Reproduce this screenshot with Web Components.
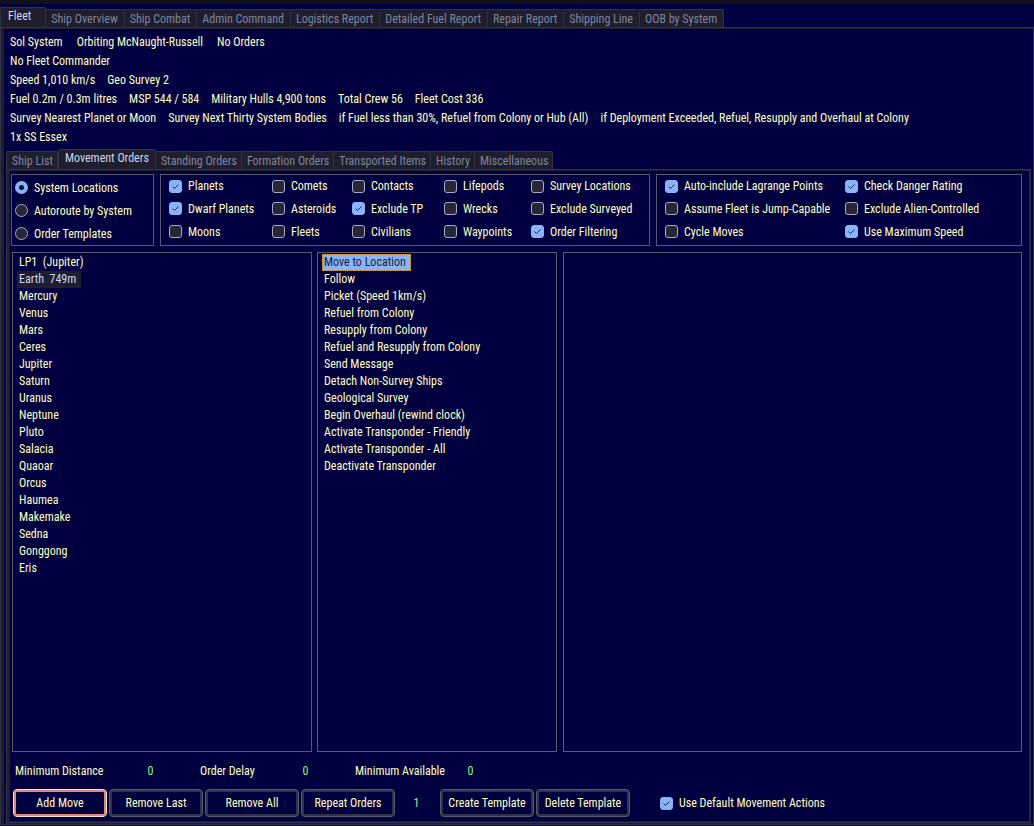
<!DOCTYPE html>
<html lang="en">
<head>
<meta charset="utf-8">
<title>Fleet Orders</title>
<style>
  html, body { margin: 0; background: #000040; }
  body {
    color: #ffffc0;
    font: 12px/16px "Roboto Condensed", Roboto, sans-serif;
    --navy: #000040;
    --panel: #1e1e2e;
    --edge: #313244;
    --line: #585b70;
    --blue: #89b4fa;
    --muted: #7f849c;
    --green: #80ff80;
  }
</style>
</head>
<body>
<fleet-window></fleet-window>

<template id="t-window">
  <style>
    :host { display: flex; flex-direction: column; min-height: 100vh; box-sizing: border-box; border-top: 4px solid #11111b; padding: 4px 0 1px; }
    .outer { flex: 1; }
    .info { display: flex; flex-direction: column; padding: 5px 6px 0; }
    .row { display: flex; gap: 12px; height: 19px; line-height: 19px; white-space: nowrap; }
    .row.wide { gap: 14px; }
    .inner { flex: 1; padding: 3px 2px 0 2px; }
    .body { display: flex; flex-direction: column; flex: 1; padding: 4px 7px 4px 1px; }
    .groups { display: flex; gap: 6px; }
    .lists { display: flex; gap: 6px; flex: 1; padding: 6px 0 0 1px; }
    .values { display: flex; gap: 30px; height: 37px; align-items: center; padding-left: 4px; }
    .actions { display: flex; align-items: center; gap: 2px; padding-left: 2px; height: 28px; }
    field-group.filters { flex: 0 1 490px; }
    field-group.modes { flex: 0 0 143px; }
    field-group.options { flex: 1; }
    .grid { display: grid; grid-template-rows: 22px 23px 23px; }
    .filters .grid { grid-template-columns: 103px 80px 92px 87px auto; }
    .options .grid { grid-template-columns: 180px auto; }
    order-list.locations { flex: 0 1 300px; margin-right: -1px; }
    order-list.orders { flex: 0 1 240px; }
    order-list.queue { flex: 1; }
    .distance { --label: 116px; }
    .delay { --label: 86px; }
    .available { --label: 96px; }
    .repeat { margin-right: 2px; }
    order-check.defaults { margin-left: 28px; }
  </style>
  <tab-panel class="outer" label="Fleet views" selected="0"
    tabs="Fleet|Ship Overview|Ship Combat|Admin Command|Logistics Report|Detailed Fuel Report|Repair Report|Shipping Line|OOB by System">
    <div class="info">
      <div class="row wide"><span>Sol System</span><span>Orbiting McNaught-Russell</span><span>No Orders</span></div>
      <div class="row"><span>No Fleet Commander</span></div>
      <div class="row"><span>Speed 1,010 km/s</span><span>Geo Survey 2</span></div>
      <div class="row"><span>Fuel 0.2m / 0.3m litres</span><span>MSP 544 / 584</span><span>Military Hulls 4,900 tons</span><span>Total Crew 56</span><span>Fleet Cost 336</span></div>
      <div class="row"><span>Survey Nearest Planet or Moon</span><span>Survey Next Thirty System Bodies</span><span>if Fuel less than 30%, Refuel from Colony or Hub (All)</span><span>if Deployment Exceeded, Refuel, Resupply and Overhaul at Colony</span></div>
      <div class="row"><span>1x SS Essex</span></div>
    </div>
    <tab-panel class="inner" label="Fleet details" selected="1"
      tabs="Ship List|Movement Orders|Standing Orders|Formation Orders|Transported Items|History|Miscellaneous">
      <div class="body">
        <div class="groups">
          <field-group class="modes"><mode-picker></mode-picker></field-group>
          <field-group class="filters"><div class="grid">
            <order-check checked>Planets</order-check><order-check>Comets</order-check><order-check>Contacts</order-check><order-check>Lifepods</order-check><order-check>Survey Locations</order-check>
            <order-check checked>Dwarf Planets</order-check><order-check>Asteroids</order-check><order-check checked>Exclude TP</order-check><order-check>Wrecks</order-check><order-check>Exclude Surveyed</order-check>
            <order-check>Moons</order-check><order-check>Fleets</order-check><order-check>Civilians</order-check><order-check>Waypoints</order-check><order-check checked>Order Filtering</order-check>
          </div></field-group>
          <field-group class="options"><div class="grid">
            <order-check checked>Auto-include Lagrange Points</order-check><order-check checked>Check Danger Rating</order-check>
            <order-check>Assume Fleet is Jump-Capable</order-check><order-check>Exclude Alien-Controlled</order-check>
            <order-check>Cycle Moves</order-check><order-check checked>Use Maximum Speed</order-check>
          </div></field-group>
        </div>
        <div class="lists">
          <order-list class="locations" label="System locations" selected="1"
            items="LP1  (Jupiter)|Earth  749m|Mercury|Venus|Mars|Ceres|Jupiter|Saturn|Uranus|Neptune|Pluto|Salacia|Quaoar|Orcus|Haumea|Makemake|Sedna|Gonggong|Eris"></order-list>
          <order-list class="orders" label="Available orders" selected="0" active
            items="Move to Location|Follow|Picket (Speed 1km/s)|Refuel from Colony|Resupply from Colony|Refuel and Resupply from Colony|Send Message|Detach Non-Survey Ships|Geological Survey|Begin Overhaul (rewind clock)|Activate Transponder - Friendly|Activate Transponder - All|Deactivate Transponder"></order-list>
          <order-list class="queue" label="Assigned orders" items=""></order-list>
        </div>
        <div class="values">
          <value-field class="distance" label="Minimum Distance" value="0"></value-field>
          <value-field class="delay" label="Order Delay" value="0"></value-field>
          <value-field class="available" label="Minimum Available" value="0"></value-field>
        </div>
        <div class="actions">
          <action-button primary>Add Move</action-button>
          <action-button>Remove Last</action-button>
          <action-button>Remove All</action-button>
          <action-button>Repeat Orders</action-button>
          <value-field class="repeat" name="Repeat count" value="1"></value-field>
          <action-button>Create Template</action-button>
          <action-button>Delete Template</action-button>
          <order-check class="defaults" checked>Use Default Movement Actions</order-check>
        </div>
      </div>
    </tab-panel>
  </tab-panel>
</template>

<template id="t-tabs">
  <style>
    :host { display: flex; flex-direction: column; }
    .bar { display: flex; align-items: flex-end; height: 19px; }
    button {
      font: inherit; color: var(--muted); background: var(--panel); white-space: nowrap;
      height: 18px; padding: 0 4px 0 5px; margin: 0; box-sizing: border-box; line-height: 18px;
      border: 1px solid var(--edge); border-left-width: 0; border-bottom: 0; border-radius: 0 2px 0 0;
    }
    button:first-child { border-left-width: 1px; }
    button[aria-selected="true"] { color: #cdd6f4; height: 21px; padding: 0 6px 3px; line-height: 17px; margin-bottom: -1px; border-radius: 2px 2px 0 0; border-left-width: 1px; }
    :host(.outer) button { padding-right: 6px; }
    :host(.outer) button:first-child { padding: 0 14px 3px 7px; }
    .panel {
      display: flex; flex-direction: column; flex: 1;
      border: solid var(--panel); border-width: 1px 1px 2px 4px; box-shadow: inset 0 1px var(--panel);
      outline: 1px solid var(--edge); outline-offset: -1px;
    }
    :host(.inner) .panel { border-right-width: 2px; }
  </style>
  <div class="bar" role="tablist"></div>
  <div class="panel" role="tabpanel"><slot></slot></div>
</template>

<template id="t-group">
  <style>
    :host { display: block; box-sizing: border-box; border: 1px solid var(--line); height: 72px; padding: 0 8px; }
    :host(.modes) { padding: 0 3px; }
  </style>
  <slot></slot>
</template>

<template id="t-modes">
  <style>
    :host { display: grid; grid-auto-rows: 23px; padding-top: 1px; }
    label { display: flex; align-items: center; gap: 6px; white-space: nowrap; }
    input { appearance: none; margin: 0; width: 13px; height: 13px; box-sizing: border-box; border: 1px solid #a6adc8; border-radius: 50%; background: #262637; }
    input:checked { border: 4px solid var(--blue); background: #11111b; }
  </style>
  <label><input type="radio" name="mode" checked><span>System Locations</span></label>
  <label><input type="radio" name="mode"><span>Autoroute by System</span></label>
  <label><input type="radio" name="mode"><span>Order Templates</span></label>
</template>

<template id="t-check">
  <style>
    :host { display: flex; align-items: center; }
    label { display: flex; align-items: center; gap: 6px; white-space: nowrap; }
    .box { display: grid; width: 13px; height: 13px; }
    .box > * { grid-area: 1 / 1; }
    input { appearance: none; margin: 0; width: 13px; height: 13px; box-sizing: border-box; border: 1px solid #a6adc8; border-radius: 3px; background: #262637; }
    input:checked { border-color: var(--blue); background: var(--blue); }
    svg { width: 13px; height: 13px; pointer-events: none; visibility: hidden; fill: none; stroke: #1e2b4a; stroke-width: 1; }
    input:checked + svg { visibility: visible; }
  </style>
  <label><span class="box"><input type="checkbox"><svg viewBox="0 0 13 13" aria-hidden="true"><path d="M3.5 6.5 L5.5 8.5 L9.5 4.5"/></svg></span><span><slot></slot></span></label>
</template>

<template id="t-list">
  <style>
    :host { display: block; box-sizing: border-box; border: 1px solid var(--line); min-width: 0; }
    ul { list-style: none; margin: 0; padding: 1px 4px 0; display: flex; flex-direction: column; align-items: flex-start; }
    li { height: 17px; line-height: 17px; padding: 0 5px 0 2px; white-space: pre; box-sizing: border-box; }
    li[aria-selected="true"] { background: var(--panel); color: #cdd6f4; }
    :host([active]) li[aria-selected="true"] { background: var(--blue); color: #1e1e2e; outline: 1px dotted #b07a20; outline-offset: -1px; }
  </style>
  <ul role="listbox"></ul>
</template>

<template id="t-value">
  <style>
    :host { display: block; }
    label { display: grid; grid-template-columns: var(--label) 39px; align-items: center; white-space: nowrap; }
    :host(.repeat) label { grid-template-columns: 39px; }
    input { font: inherit; color: var(--green); background: none; border: 0; padding: 0; margin: 0; width: 39px; text-align: center; height: 18px; }
  </style>
  <label><span></span><input type="text"></label>
</template>

<template id="t-button">
  <style>
    :host { display: block; }
    button {
      font: inherit; color: inherit; background: var(--navy); width: 94px; height: 28px; box-sizing: border-box; padding: 0; display: block; white-space: nowrap;
      border: 1px solid var(--line); border-radius: 4px; box-shadow: inset 0 0 0 2px var(--edge);
    }
    :host([primary]) button { border-color: #f5e0dc; box-shadow: inset 0 0 0 2px #e08870; }
  </style>
  <button type="button"><slot></slot></button>
</template>

<script>
  class Base extends HTMLElement {
    constructor() {
      super();
      this.attachShadow({ mode: "open" }).append(
        document.getElementById(this.constructor.template).content.cloneNode(true));
    }
    $(selector) { return this.shadowRoot.querySelector(selector); }
    list(name) { return (this.getAttribute(name) || "").split("|").filter(Boolean); }
  }

  class TabPanel extends Base {
    static template = "t-tabs";
    connectedCallback() {
      const bar = this.$(".bar");
      bar.setAttribute("aria-label", this.getAttribute("label"));
      bar.replaceChildren(...this.list("tabs").map((text, i) => {
        const tab = document.createElement("button");
        tab.type = "button";
        tab.setAttribute("role", "tab");
        tab.setAttribute("aria-selected", i === Number(this.getAttribute("selected")));
        tab.textContent = text;
        return tab;
      }));
    }
  }

  class OrderList extends Base {
    static template = "t-list";
    connectedCallback() {
      const ul = this.$("ul");
      ul.setAttribute("aria-label", this.getAttribute("label"));
      const selected = this.hasAttribute("selected") ? Number(this.getAttribute("selected")) : -1;
      ul.replaceChildren(...this.list("items").map((text, i) => {
        const li = document.createElement("li");
        li.setAttribute("role", "option");
        li.setAttribute("aria-selected", i === selected);
        li.textContent = text;
        return li;
      }));
    }
  }

  class OrderCheck extends Base {
    static template = "t-check";
    connectedCallback() { this.$("input").checked = this.hasAttribute("checked"); }
  }

  class ValueField extends Base {
    static template = "t-value";
    connectedCallback() {
      const label = this.getAttribute("label");
      if (label) this.$("span").textContent = label;
      else {
        this.$("span").remove();
        this.$("input").setAttribute("aria-label", this.getAttribute("name"));
      }
      this.$("input").value = this.getAttribute("value");
    }
  }

  class FieldGroup extends Base { static template = "t-group"; }
  class ModePicker extends Base { static template = "t-modes"; }
  class ActionButton extends Base { static template = "t-button"; }
  class FleetWindow extends Base { static template = "t-window"; }

  customElements.define("tab-panel", TabPanel);
  customElements.define("order-list", OrderList);
  customElements.define("order-check", OrderCheck);
  customElements.define("value-field", ValueField);
  customElements.define("field-group", FieldGroup);
  customElements.define("mode-picker", ModePicker);
  customElements.define("action-button", ActionButton);
  customElements.define("fleet-window", FleetWindow);
</script>
</body>
</html>
